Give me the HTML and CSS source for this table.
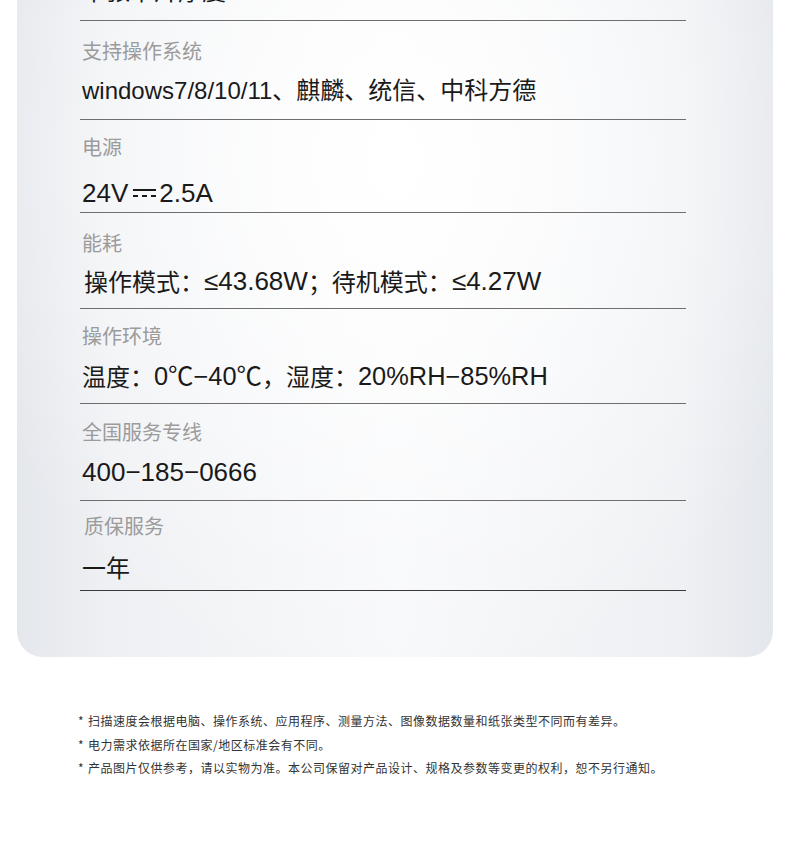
FILE: index.html
```html
<!DOCTYPE html>
<html lang="zh-CN">
<head>
<meta charset="utf-8">
<title>规格参数</title>
<link rel="stylesheet" href="styles.css">
</head>
<body>
<div class="card">
  <div class="row">
    <div class="label">介质厚度</div>
    <div class="value">单张卡片厚度 ≤ 1.2mm</div>
  </div>
  <div class="row">
    <div class="label">支持操作系统</div>
    <div class="value">windows7/8/10/11、麒麟、统信、中科方德</div>
  </div>
  <div class="row">
    <div class="label">电源</div>
    <div class="value big">24V<svg class="dc" width="25" height="14" viewBox="0 0 25 14" aria-hidden="true"><rect x="1" y="2" width="23" height="2" fill="#1a1a1a"/><rect x="1" y="8" width="5" height="2" fill="#1a1a1a"/><rect x="10" y="8" width="5" height="2" fill="#1a1a1a"/><rect x="19" y="8" width="5" height="2" fill="#1a1a1a"/></svg>2.5A</div>
  </div>
  <div class="row">
    <div class="label">能耗</div>
    <div class="value big indent"><span class="cjk">操作模式：</span>≤43.68W<span class="cjk">；待机模式：</span>≤4.27W</div>
  </div>
  <div class="row">
    <div class="label">操作环境</div>
    <div class="value big temp"><span class="cjk">温度：</span>0℃−40℃<span class="cjk">，湿度：</span>20%RH−85%RH</div>
  </div>
  <div class="row">
    <div class="label">全国服务专线</div>
    <div class="value big">400−185−0666</div>
  </div>
  <div class="row last">
    <div class="label indent">质保服务</div>
    <div class="value">一年</div>
  </div>
</div>
<div class="notes">
  <p class="note"><span class="star">*</span>扫描速度会根据电脑、操作系统、应用程序、测量方法、图像数据数量和纸张类型不同而有差异。</p>
  <p class="note"><span class="star">*</span>电力需求依据所在国家/地区标准会有不同。</p>
  <p class="note"><span class="star">*</span>产品图片仅供参考，请以实物为准。本公司保留对产品设计、规格及参数等变更的权利，恕不另行通知。</p>
</div>
</body>
</html>
```
FILE: styles.css
```css
html, body {
  margin: 0;
  padding: 0;
  background: #ffffff;
}
body {
  font-family: "Liberation Sans", "Noto Sans CJK SC", sans-serif;
  overflow: hidden;
}
.card {
  margin: -108px 17px 0;
  padding: 30px 87px 66px 63px;
  border-radius: 0 0 26px 26px;
  background:
    radial-gradient(ellipse 60% 70% at 50% 35%, rgba(255,255,255,1) 0%, rgba(255,255,255,0.6) 45%, rgba(255,255,255,0) 100%),
    linear-gradient(90deg, #e4e7ec 0%, #eef0f3 12%, #f7f8fa 50%, #eef0f3 88%, #e4e7ec 100%);
  background-color: #e8ebef;
}
.row {
  display: flex;
  flex-direction: column;
  padding: 20px 0 13px;
  border-bottom: 1px solid #6e6e6e;
}
.label {
  font-family: "Noto Sans CJK SC", sans-serif;
  font-size: 20px;
  line-height: 20px;
  height: 20px;
  color: #9b9b9b;
  padding-left: 2px;
}
.value {
  margin-top: 15px;
  font-size: 24px;
  line-height: 30px;
  height: 30px;
  color: #1a1a1a;
  padding-left: 2px;
  white-space: nowrap;
  display: flex;
  align-items: center;
}
.value.big {
  font-size: 26px;
}
.value.temp {
  font-size: 25.4px;
}
.cjk {
  font-family: "Noto Sans CJK SC", sans-serif;
  font-size: 24px;
}
.indent {
  padding-left: 4px;
}
.dc {
  margin: 0 2px 0 4px;
  position: relative;
  top: 1px;
}
.row:nth-child(3) { padding-top: 17px; padding-bottom: 4px; }
.row:nth-child(3) .value { margin-top: 21px; }
.row:nth-child(4) { padding-top: 20px; padding-bottom: 12px; }
.row:nth-child(4) .value { margin-top: 13px; }
.row:nth-child(5) { padding-top: 17px; padding-bottom: 12px; }
.row:nth-child(6) { padding-top: 18px; padding-bottom: 13px; }
.row:nth-child(7) { padding-top: 15px; padding-bottom: 6px; }
.row:nth-child(7) .value { margin-top: 18px; }
.row.last {
  border-bottom-color: #3a3a3a;
}
.notes {
  margin-top: 52px;
  padding-left: 78px;
}
.note {
  margin: 0;
  font-family: "Noto Sans CJK SC", sans-serif;
  font-size: 12px;
  letter-spacing: 0.5px;
  line-height: 23.5px;
  color: #333333;
  white-space: nowrap;
}
.star {
  display: inline-block;
  width: 10px;
  letter-spacing: 0;
}
```
